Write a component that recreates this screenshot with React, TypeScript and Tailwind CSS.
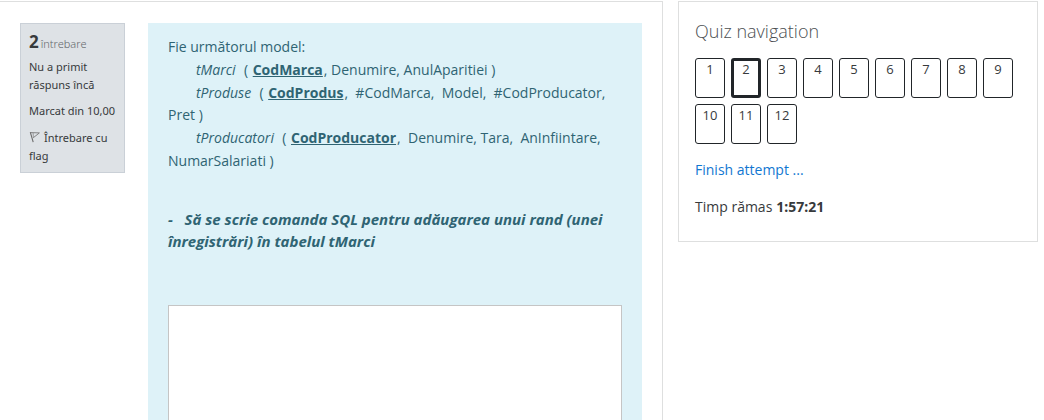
const questions = [1, 2, 3, 4, 5, 6, 7, 8, 9, 10, 11, 12];
const current = 2;

function FlagIcon() {
  return (
    <svg viewBox="0 0 12 12" className="mr-[3px] inline-block size-3 align-[-1px]" fill="none" aria-hidden="true">
      <path d="M1.3 1.2 L4.2 11.2" stroke="#6b6b6b" strokeWidth="1.1" />
      <path d="M1.6 1.6 L10.4 1.9 L4.2 6.8" stroke="#777" strokeWidth="0.9" />
      <path d="M4.1 1.8 L4.4 6.4" stroke="#8a8a8a" strokeWidth="0.8" />
    </svg>
  );
}

function QuestionInfo() {
  return (
    <aside className="w-[105px] shrink-0 self-start border border-[#cad0d7] bg-[#dee2e6] py-[7px] pr-[6px] pl-2 font-['Noto_Sans','Open_Sans',sans-serif] text-[11px] leading-[18px] text-[#373a3c]">
      <h3 className="leading-[22px] whitespace-nowrap">
        <span className="text-[17px] font-bold">2</span>
        <span className="ml-[2px] font-light text-[#63676b]">întrebare</span>
      </h3>
      <div className="mt-[3px]">Nu a primit răspuns încă</div>
      <div className="mt-2 whitespace-nowrap">Marcat din 10,00</div>
      <button type="button" className="mt-[9px] block text-left">
        <FlagIcon />
        Întrebare cu flag
      </button>
    </aside>
  );
}

function Table({ children }: { children: string }) {
  return <em className="mr-px italic">{children}</em>;
}

function Key({ children }: { children: string }) {
  return <strong className="mx-px font-bold underline">{children}</strong>;
}

function QuestionText() {
  return (
    <div className="leading-relaxed">
      <p>Fie următorul model:</p>
      <p className="indent-7">
        <Table>tMarci</Table>&nbsp; ( <Key>CodMarca</Key>, Denumire, AnulAparitiei )
      </p>
      <p className="indent-7">
        <Table>tProduse</Table>&nbsp; ( <Key>CodProdus</Key>,&nbsp; #CodMarca,&nbsp; Model,&nbsp; #CodProducator,{" "}
        <span>Pret&nbsp;)</span>
      </p>
      <p className="indent-7">
        <Table>tProducatori</Table>&nbsp; ( <Key>CodProducator</Key>,&nbsp; Denumire, Tara,&nbsp; AnInfiintare,{" "}
        <span>NumarSalariati&nbsp;)</span>
      </p>
      <p className="mt-[35px] text-[15px] leading-[22px] font-bold italic">
        -&nbsp;&nbsp; Să se scrie comanda SQL pentru adăugarea unui rand (unei înregistrări) în tabelul tMarci
      </p>
    </div>
  );
}

function QuizNavigation() {
  return (
    <nav aria-labelledby="nav-title" className="w-[360px] shrink-0 self-start border border-[#dedfdf] bg-white px-4 pt-4 pb-[23px]">
      <h2 id="nav-title" className="text-[18px] leading-[27px] font-light text-[#4c4f52]">
        Quiz navigation
      </h2>
      <div className="mt-[13px] flex flex-wrap gap-[6px]">
        {questions.map((n) => (
          <a
            key={n}
            href={`#question-${n}`}
            aria-current={n === current ? "page" : undefined}
            className={
              n === current
                ? "h-10 w-[30px] rounded-[3px] border-[3px] border-[#212529] text-center text-[13px] leading-[16px] text-[#373a3c]"
                : "h-10 w-[30px] rounded-[3px] border border-[#212529] pt-[2px] text-center text-[13px] leading-[16px] text-[#373a3c]"
            }
          >
            {n}
          </a>
        ))}
      </div>
      <a href="#finish" className="mt-[15px] block leading-[22px] text-[#1177d1]">
        Finish attempt ...
      </a>
      <div className="mt-[15px] flex items-baseline gap-1 leading-[22px]">
        <span>Timp rămas</span>
        <span className="font-['Noto_Sans','Open_Sans',sans-serif] font-bold">1:57:21</span>
      </div>
    </nav>
  );
}

export default function App() {
  return (
    <div className="flex min-h-screen gap-[15px] overflow-hidden bg-white pt-px pr-[6px] font-['Open_Sans','Noto_Sans',sans-serif] text-[14px] text-[#373a3c]">
      <main className="flex min-w-0 flex-1 gap-[23px] border-t border-r border-[#dedfdf] pt-[21px] pr-5 pl-5">
        <QuestionInfo />
        <section className="flex min-w-0 flex-1 flex-col bg-[#def2f8] px-5 pt-[13px] text-[#2f6473]">
          <QuestionText />
          <textarea
            aria-label="Răspuns"
            className="mt-[53px] block min-h-[115px] w-full flex-1 resize-none border border-b-0 border-[#c5c5c5] bg-white p-2 outline-none"
          />
        </section>
      </main>
      <QuizNavigation />
    </div>
  );
}
